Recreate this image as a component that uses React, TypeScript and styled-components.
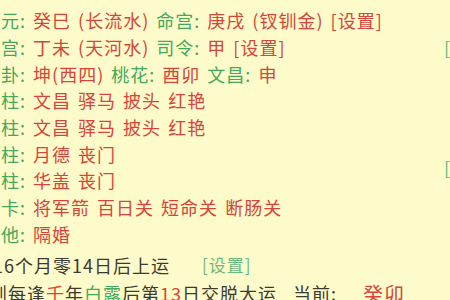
import React from "react";
import styled, { createGlobalStyle } from "styled-components";

const GlobalStyle = createGlobalStyle`
  html, body {
    margin: 0;
    padding: 0;
    background: #fdfbc9;
  }
  body {
    width: 450px;
    height: 300px;
    overflow: hidden;
    font-family: "Noto Sans CJK SC", "Noto Sans", sans-serif;
  }
`;

type Tone = "label" | "value" | "plain" | "link";

const colors: Record<Tone, string> = {
  label: "#45a85e",
  value: "#d6453b",
  plain: "#3b3a33",
  link: "#6cb97c",
};

const Page = styled.div`
  display: flex;
  flex-direction: column;
  padding-top: 7px;
  font-size: 18px;
  letter-spacing: 1px;
  word-spacing: 2px;
`;

const Row = styled.div<{ $indent?: number; $height?: number }>`
  display: flex;
  align-items: center;
  height: ${(p) => p.$height ?? 26.7}px;
  margin-left: ${(p) => p.$indent ?? 1}px;
  white-space: pre;
`;

const Part = styled.span<{ $tone: Tone; $gap?: number; $size?: number }>`
  color: ${(p) => colors[p.$tone]};
  margin-left: ${(p) => p.$gap ?? 0}px;
  font-size: ${(p) => (p.$size ? `${p.$size}px` : "inherit")};
`;

const Fortune = styled.div`
  display: flex;
  flex-direction: column;
  margin-top: 3px;
`;

const EdgeMark = styled.span<{ $drop?: number }>`
  margin-left: auto;
  color: ${colors.link};
  letter-spacing: 0;
  position: relative;
  top: ${(p) => p.$drop ?? 0}px;
`;

type Seg = [Tone, string];

const pillars: Seg[][] = [
  [["label", "元: "], ["value", "癸巳 (长流水) "], ["label", "命宫: "], ["value", "庚戌 (钗钏金) [设置]"]],
  [["label", "宫: "], ["value", "丁未 (天河水) "], ["label", "司令: "], ["value", "甲 [设置]"]],
  [["label", "卦: "], ["value", "坤(西四) "], ["label", "桃花: "], ["value", "酉卯 "], ["label", "文昌: "], ["value", "申"]],
  [["label", "柱: "], ["value", "文昌 驿马 披头 红艳"]],
  [["label", "柱: "], ["value", "文昌 驿马 披头 红艳"]],
  [["label", "柱: "], ["value", "月德 丧门"]],
  [["label", "柱: "], ["value", "华盖 丧门"]],
  [["label", "卡: "], ["value", "将军箭 百日关 短命关 断肠关"]],
  [["label", "他: "], ["value", "隔婚"]],
];

const marks: Record<number, number> = { 1: 0, 5: 13 };

export default function App() {
  return (
    <>
      <GlobalStyle />
      <Page>
        {pillars.map((segs, i) => (
          <Row key={i}>
            {segs.map(([tone, text], j) => (
              <Part key={j} $tone={tone}>
                {text}
              </Part>
            ))}
            {i in marks && <EdgeMark $drop={marks[i]}>[</EdgeMark>}
          </Row>
        ))}
        <Fortune>
          <Row $indent={-7} $height={29}>
            <Part $tone="plain">16个月零14日后上运</Part>
            <Part $tone="link" $gap={32} $size={17}>
              [设置]
            </Part>
          </Row>
          <Row $indent={-11} $height={28}>
            <Part $tone="plain">则每逢</Part>
            <Part $tone="value">壬</Part>
            <Part $tone="plain">年</Part>
            <Part $tone="label">白露</Part>
            <Part $tone="plain">后第</Part>
            <Part $tone="value">13</Part>
            <Part $tone="plain">日交脱大运</Part>
            <Part $tone="plain" $gap={16}>
              当前:
            </Part>
            <Part $tone="value" $gap={26} $size={20}>
              癸卯
            </Part>
          </Row>
        </Fortune>
      </Page>
    </>
  );
}
